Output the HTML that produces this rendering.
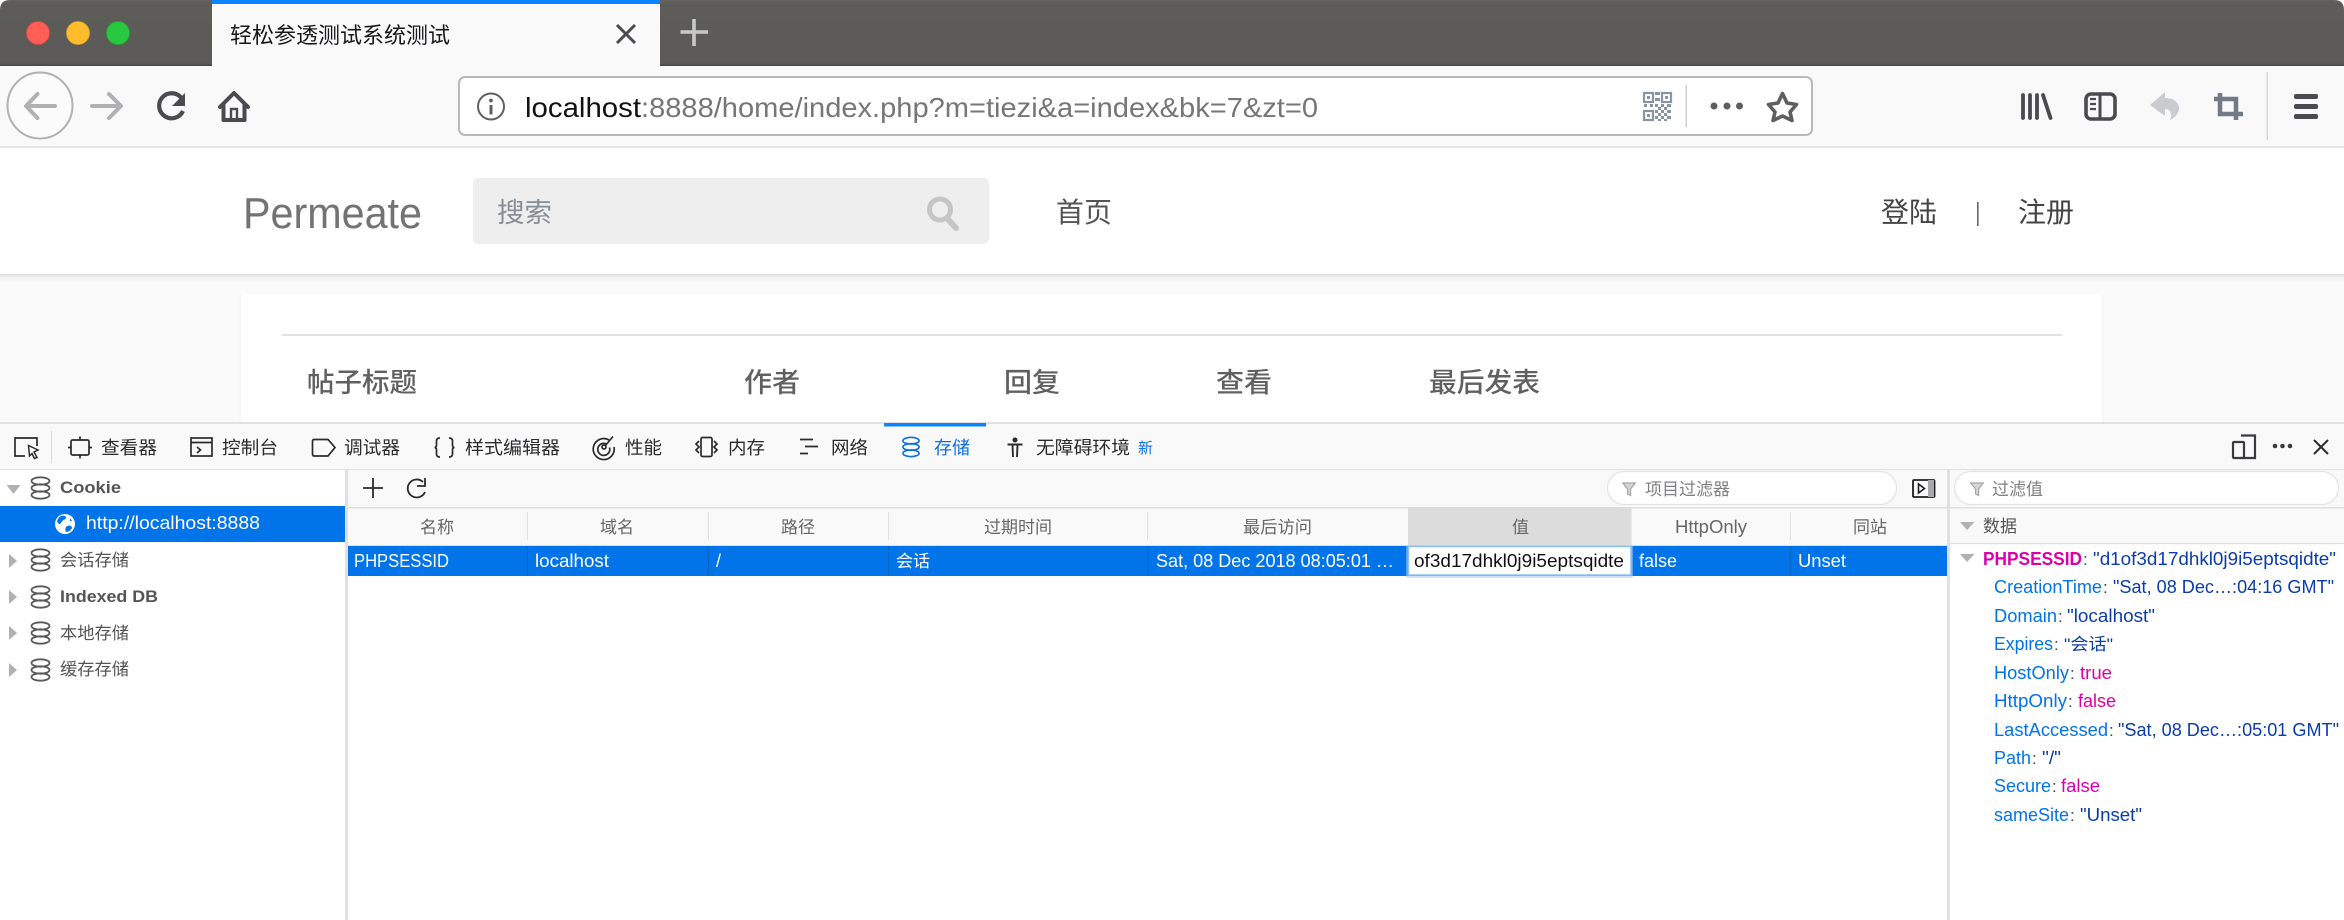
<!DOCTYPE html>
<html lang="zh"><head><meta charset="utf-8"><title>轻松参透测试系统测试</title>
<style>
html,body{margin:0;padding:0;background:#fff;width:2344px;height:920px;overflow:hidden}
svg{display:block;position:absolute;left:0;top:0;filter:blur(.35px)}
text{font-family:"Liberation Sans","Noto Sans CJK SC",sans-serif;white-space:pre}
.tb{font-size:18px;fill:#2b2b2e}
.h{font-size:17px;fill:#666}
.r{font-size:18px;fill:#fff}
.k{font-size:18px;fill:#0074e8}
.v{font-size:18px;fill:#0a3daa}
.c{font-size:17px;fill:#444}
.m{font-size:18px;fill:#dd00a9}
.side{font-size:17px;fill:#555}
.ic{fill:none;stroke:#2b2b2e;stroke-width:1.7}
</style></head><body>
<svg width="2344" height="920" viewBox="0 0 2344 920" xmlns="http://www.w3.org/2000/svg">
<defs>
<linearGradient id="strip" x1="0" y1="0" x2="0" y2="1"><stop offset="0" stop-color="#666664"/><stop offset=".04" stop-color="#5d5c59"/><stop offset=".96" stop-color="#5b5a57"/><stop offset="1" stop-color="#444"/></linearGradient>
<linearGradient id="shade" x1="0" y1="0" x2="0" y2="1"><stop offset="0" stop-color="#dcdcdc"/><stop offset=".35" stop-color="#f1f1f1"/><stop offset="1" stop-color="#fafafa"/></linearGradient>
<symbol id="db" viewBox="0 0 20 22" overflow="visible"><g fill="none" stroke-width="1.8" stroke="currentColor"><ellipse cx="10" cy="18" rx="9" ry="3.7"/><ellipse cx="10" cy="11" rx="9" ry="3.7"/><ellipse cx="10" cy="4" rx="9" ry="3.7"/></g></symbol>
<symbol id="fn" viewBox="0 0 14 15"><path d="M.8 1H13.2L8.6 7V13.5L5.6 12V7Z" fill="#d6d6d6" stroke="#a6a6a6" stroke-width="1.2"/></symbol>
</defs>

<!-- page background -->
<rect width="2344" height="920" fill="#fff"/>
<!-- tab strip -->
<path d="M0 66V10Q0 0 10 0H2334Q2344 0 2344 10V66Z" fill="url(#strip)"/>
<rect x="212" y="0" width="448" height="66" fill="#f9f9fa"/>
<rect x="212" y="0" width="448" height="4" fill="#0a84ff"/>
<ellipse cx="38" cy="33" rx="11.5" ry="11.5" fill="#ff5f57" stroke="#e0443e" stroke-width=".8"/>
<ellipse cx="78" cy="33" rx="11.5" ry="11.5" fill="#ffbd2e" stroke="#dea123" stroke-width=".8"/>
<ellipse cx="118" cy="33" rx="11.5" ry="11.5" fill="#28c940" stroke="#1dad2b" stroke-width=".8"/>
<text x="230" y="43" font-size="22" fill="#18181a" textLength="220" lengthAdjust="spacingAndGlyphs">轻松参透测试系统测试</text>
<path d="M617 25L635 43M635 25L617 43" stroke="#4a4a4f" stroke-width="3" fill="none"/>
<path d="M694 19V46M680.5 32H708" stroke="#c9c9c9" stroke-width="3.6" fill="none"/>

<!-- nav toolbar -->
<rect x="0" y="66" width="2344" height="80" fill="#f9f9fa"/>
<rect x="0" y="146" width="2344" height="2" fill="#e3e3e4"/>
<ellipse cx="40" cy="105.5" rx="32.5" ry="33" fill="#fbfbfb" stroke="#b1b1b3" stroke-width="2"/>
<path d="M55 106H27M37.5 94L26 106L37.5 118" fill="none" stroke="#b1b1b3" stroke-width="4" stroke-linecap="round" stroke-linejoin="round"/>
<path d="M92 106H120M109 94L121 106L109 118" fill="none" stroke="#b1b1b3" stroke-width="4" stroke-linecap="round" stroke-linejoin="round"/>
<path d="M181 97.5A12.5 12.5 0 1 0 183 111" fill="none" stroke="#4a4a4f" stroke-width="4.2"/>
<path d="M185 93V106H172Z" fill="#4a4a4f"/>
<path d="M220 107L234 93L248 107M223.5 104V120H244.500V104" fill="none" stroke="#4a4a4f" stroke-width="4" stroke-linejoin="round" stroke-linecap="round"/>
<rect x="231" y="109" width="6" height="11" fill="none" stroke="#4a4a4f" stroke-width="2.4"/>

<!-- URL bar -->
<rect x="459" y="77" width="1353" height="58" rx="6" fill="#fff" stroke="#b9b9ba" stroke-width="2"/>
<circle cx="491" cy="106.500" r="13" fill="none" stroke="#5f5f62" stroke-width="2"/>
<rect x="489.500" y="105" width="3" height="9.500" fill="#5f5f62"/><circle cx="491" cy="100.500" r="1.900" fill="#5f5f62"/>
<text x="525" y="117" font-size="28" fill="#111" textLength="116" lengthAdjust="spacingAndGlyphs">localhost</text>
<text x="641" y="117" font-size="28" fill="#767678" textLength="677" lengthAdjust="spacingAndGlyphs">:8888/home/index.php?m=tiezi&amp;a=index&amp;bk=7&amp;zt=0</text>
<!-- QR -->
<g fill="none" stroke="#8794a3" stroke-width="2.200">
<rect x="1644" y="93" width="9" height="9"/><rect x="1662" y="93" width="9" height="9"/><rect x="1644" y="111" width="9" height="9"/>
</g>
<g fill="#8794a3">
<rect x="1647" y="96" width="3" height="3"/><rect x="1665" y="96" width="3" height="3"/><rect x="1647" y="114" width="3" height="3"/>
<rect x="1655" y="92" width="5" height="3"/><rect x="1655" y="98" width="5" height="3"/><rect x="1655" y="104" width="3" height="3"/>
<rect x="1661" y="104" width="3" height="3"/><rect x="1667" y="104" width="4" height="3"/><rect x="1644" y="104" width="3" height="3"/><rect x="1650" y="104" width="3" height="3"/>
<rect x="1655" y="110" width="3" height="3"/><rect x="1661" y="110" width="3" height="3"/><rect x="1667" y="110" width="4" height="3"/>
<rect x="1658" y="107" width="3" height="3"/><rect x="1664" y="107" width="3" height="3"/><rect x="1655" y="116" width="3" height="3"/><rect x="1661" y="116" width="3" height="3"/><rect x="1667" y="116" width="4" height="3"/>
<rect x="1658" y="113" width="3" height="3"/><rect x="1664" y="113" width="3" height="3"/><rect x="1658" y="119" width="3" height="2"/><rect x="1664" y="119" width="3" height="2"/>
</g>
<rect x="1685.500" y="85" width="1.500" height="42" fill="#cfcfcf"/>
<circle cx="1714" cy="106" r="3.500" fill="#5e5e60"/><circle cx="1727" cy="106" r="3.500" fill="#5e5e60"/><circle cx="1739.500" cy="106" r="3.500" fill="#5e5e60"/>
<path d="M1782.500 93.500L1787 103L1796.500 104.500L1790 112L1792 120.500L1782.500 116L1773 120.500L1775 112L1768.500 104.500L1778 103Z" fill="none" stroke="#5e5e60" stroke-width="3.600" stroke-linejoin="round"/>
<!-- right toolbar -->
<g stroke="#4a4a4f" stroke-width="3.800" stroke-linecap="round" fill="none">
<path d="M2023 95V118M2030 95V118M2037 95V118M2043 95L2050.500 118"/>
</g>
<rect x="2086" y="94" width="29" height="25" rx="5" fill="none" stroke="#4a4a4f" stroke-width="3.600"/>
<path d="M2100 94V119" stroke="#4a4a4f" stroke-width="3"/>
<path d="M2090 99H2096M2090 104H2096M2090 109H2096" stroke="#4a4a4f" stroke-width="2.200"/>
<path d="M2165 92L2150 105L2165 116V109C2171 109 2172 114 2170 120C2177 117 2181 110 2178 104C2175 99 2170 98 2165 98Z" fill="#c9cdd2"/>
<path d="M2220 93V114H2243M2214 99H2236V120" fill="none" stroke="#737a87" stroke-width="4.500"/>
<rect x="2266.500" y="72" width="1.500" height="68" fill="#d8d8d8"/>
<rect x="2294" y="94" width="24" height="5" rx="2" fill="#4a4a4f"/><rect x="2294" y="104" width="24" height="5" rx="2" fill="#4a4a4f"/><rect x="2294" y="114" width="24" height="5" rx="2" fill="#4a4a4f"/>

<!-- page -->
<rect x="0" y="148" width="2344" height="126" fill="#fff"/>
<rect x="0" y="274" width="2344" height="150" fill="#fafafa"/>
<rect x="0" y="274" width="2344" height="9" fill="url(#shade)"/>
<text x="243" y="228" font-size="44" fill="#737373" textLength="179" lengthAdjust="spacingAndGlyphs">Permeate</text>
<rect x="473" y="178" width="516" height="66" rx="5" fill="#eee"/>
<text x="497" y="222" font-size="27" fill="#868e96" textLength="55" lengthAdjust="spacingAndGlyphs">搜索</text>
<circle cx="940" cy="209.500" r="10.500" fill="none" stroke="#c6c6c6" stroke-width="5"/>
<path d="M947 218L956 228" stroke="#c6c6c6" stroke-width="6" stroke-linecap="round"/>
<text x="1056" y="222" font-size="28" fill="#555" textLength="56" lengthAdjust="spacingAndGlyphs">首页</text>
<text x="1881" y="222" font-size="28" fill="#444" textLength="56" lengthAdjust="spacingAndGlyphs">登陆</text>
<rect x="1977" y="202" width="1.600" height="24" fill="#666"/>
<text x="2018" y="222" font-size="28" fill="#444" textLength="56" lengthAdjust="spacingAndGlyphs">注册</text>
<!-- card -->
<rect x="239" y="294" width="2" height="130" fill="#f6f6f6"/>
<rect x="2102" y="294" width="2" height="130" fill="#f6f6f6"/>
<rect x="241" y="294" width="1861" height="130" fill="#fff"/>
<rect x="282" y="334" width="1780" height="2" fill="#dfe3e6"/>
<g font-size="27" font-weight="500" fill="#606060">
<text x="307" y="392" textLength="110" lengthAdjust="spacingAndGlyphs">帖子标题</text>
<text x="744" y="392" textLength="56" lengthAdjust="spacingAndGlyphs">作者</text>
<text x="1004" y="392" textLength="56" lengthAdjust="spacingAndGlyphs">回复</text>
<text x="1216" y="392" textLength="56" lengthAdjust="spacingAndGlyphs">查看</text>
<text x="1429" y="392" textLength="111" lengthAdjust="spacingAndGlyphs">最后发表</text>
</g>

<!-- devtools -->
<rect x="0" y="422" width="2344" height="498" fill="#fff"/>
<rect x="0" y="422" width="2344" height="2" fill="#dfe1e4"/>
<rect x="0" y="424" width="2344" height="45" fill="#f9f9fa"/>
<rect x="0" y="469" width="2344" height="1.500" fill="#e0e0e2"/>
<rect x="884" y="423" width="102" height="3.500" fill="#0a84ff"/>
<!-- pick -->
<path d="M25 456H15V438H37V446" class="ic"/>
<path d="M28.500 445.500L38 450L34 452L37 457.500L34.500 458.500L32 453.500L29.500 456Z" fill="#fff" stroke="#2b2b2e" stroke-width="1.500"/>
<rect x="51" y="431" width="1" height="32" fill="#d8d8d8"/>
<!-- inspector -->
<rect x="71" y="440" width="18" height="15" rx="1.500" class="ic"/>
<path d="M80 436.500V440M80 455V458.500M68 447.500H71M89 447.500H92" class="ic"/>
<text x="101" y="454" class="tb" textLength="56" lengthAdjust="spacingAndGlyphs">查看器</text>
<!-- console -->
<rect x="191" y="438" width="21" height="18" class="ic"/><path d="M191 442.500H212" class="ic"/><path d="M197 447L200.500 450L197 453" class="ic"/>
<text x="222" y="454" class="tb" textLength="56" lengthAdjust="spacingAndGlyphs">控制台</text>
<!-- debugger -->
<path d="M314 439.500H328L335 447.500L328 456H314Q312.500 456 312.500 454V441.500Q312.500 439.500 314 439.500Z" class="ic"/>
<text x="344" y="454" class="tb" textLength="56" lengthAdjust="spacingAndGlyphs">调试器</text>
<!-- style -->
<path d="M440 438Q436.500 438 436.500 441V445Q436.500 447.500 434.500 447.500Q436.500 447.500 436.500 450V454Q436.500 457 440 457M449 438Q452.500 438 452.500 441V445Q452.500 447.500 454.500 447.500Q452.500 447.500 452.500 450V454Q452.500 457 449 457" class="ic" stroke-width="1.500"/>
<text x="465" y="454" class="tb" textLength="95" lengthAdjust="spacingAndGlyphs">样式编辑器</text>
<!-- perf -->
<path d="M609 440A10.500 10.500 0 1 0 614 447" class="ic"/>
<path d="M606.500 444A6 6 0 1 0 609.500 447.500" class="ic"/>
<circle cx="604" cy="447" r="2" class="ic"/><path d="M605 446L613 436.500" class="ic"/>
<text x="625" y="454" class="tb" textLength="37" lengthAdjust="spacingAndGlyphs">性能</text>
<!-- memory -->
<rect x="701" y="437.500" width="11" height="19" rx="1.500" class="ic" stroke-width="2"/>
<path d="M699 441L696 444L699 447L696 450L699 453M714 441L717 444L714 447L717 450L714 453" class="ic" stroke-width="1.300"/>
<text x="728" y="454" class="tb" textLength="37" lengthAdjust="spacingAndGlyphs">内存</text>
<!-- network -->
<path d="M800 439.500H813M805 446.500H818M800 453.500H808" class="ic" stroke-width="1.300" stroke="#555"/>
<text x="831" y="454" class="tb" textLength="37" lengthAdjust="spacingAndGlyphs">网络</text>
<!-- storage -->
<use href="#db" x="902" y="436" width="18" height="22" color="#0a6fe0"/>
<text x="934" y="454" font-size="18" fill="#0a6fe0" textLength="36" lengthAdjust="spacingAndGlyphs">存储</text>
<!-- a11y -->
<circle cx="1015" cy="440" r="2.500" fill="#2b2b2e"/>
<path d="M1007.500 444.500H1022.500M1012.500 444.500L1013 457M1017.500 444.500L1017 457" fill="none" stroke="#2b2b2e" stroke-width="1.900"/>
<text x="1036" y="454" class="tb" textLength="94" lengthAdjust="spacingAndGlyphs">无障碍环境</text>
<text x="1138" y="453" font-size="15" fill="#0a6fe0" textLength="15" lengthAdjust="spacingAndGlyphs">新</text>
<!-- right controls -->
<path d="M2241 435.500H2255V458H2241" fill="none" stroke="#3b3b3e" stroke-width="2.200"/>
<rect x="2233" y="442" width="11" height="16" rx="1" fill="none" stroke="#3b3b3e" stroke-width="2.200"/>
<circle cx="2275" cy="446" r="2.300" fill="#3b3b3e"/><circle cx="2282.500" cy="446" r="2.300" fill="#3b3b3e"/><circle cx="2290" cy="446" r="2.300" fill="#3b3b3e"/>
<path d="M2314 440L2328 454M2328 440L2314 454" stroke="#2b2b2e" stroke-width="2"/>

<!-- left sidebar -->
<rect x="0" y="470" width="345" height="450" fill="#fff"/>
<rect x="345" y="470" width="3" height="450" fill="#e0e0e2"/>
<rect x="0" y="506" width="345" height="36" fill="#0074e8"/>
<path d="M6.500 485H20.500L13.500 494Z" fill="#b1b1b3"/>
<g color="#5a5a5c"><use href="#db" x="30.500" y="477" width="20" height="22"/><use href="#db" x="30.500" y="549" width="20" height="22"/><use href="#db" x="30.500" y="586" width="20" height="22"/><use href="#db" x="30.500" y="622" width="20" height="22"/><use href="#db" x="30.500" y="659" width="20" height="22"/></g>
<text x="60" y="493" class="side" font-weight="700" textLength="61" lengthAdjust="spacingAndGlyphs">Cookie</text>
<circle cx="65" cy="524" r="10" fill="#fff"/>
<path d="M61 516C64 515 66 516 66 518C65 520 62 520 61 523C60 525 58 524 57 521C58 519 59 517 61 516ZM67 526C70 525 72 526 72 528C71 530 69 532 66 532C65 530 65 528 67 526ZM70 518L72 521L70 521Z" fill="#0074e8"/>
<text x="86" y="529" font-size="18" fill="#fff" textLength="174" lengthAdjust="spacingAndGlyphs">http://localhost:8888</text>
<path d="M9 554V568L17 561Z" fill="#b1b1b3"/>
<path d="M9 590V604L17 597Z" fill="#b1b1b3"/>
<path d="M9 626V640L17 633Z" fill="#b1b1b3"/>
<path d="M9 663V677L17 670Z" fill="#b1b1b3"/>
<text x="60" y="566" class="side" textLength="69" lengthAdjust="spacingAndGlyphs">会话存储</text>
<text x="60" y="602" class="side" font-weight="700" textLength="98" lengthAdjust="spacingAndGlyphs">Indexed DB</text>
<text x="60" y="639" class="side" textLength="69" lengthAdjust="spacingAndGlyphs">本地存储</text>
<text x="60" y="675" class="side" textLength="69" lengthAdjust="spacingAndGlyphs">缓存存储</text>

<!-- table toolbar -->
<rect x="348" y="470" width="1599" height="37" fill="#f9f9fa"/>
<rect x="348" y="507" width="1599" height="1.500" fill="#e0e0e2"/>
<path d="M373 478V498M363 488H383" stroke="#2b2b2e" stroke-width="1.800" fill="none"/>
<path d="M423 482A9 9 0 1 0 425 492" fill="none" stroke="#2b2b2e" stroke-width="1.800"/>
<path d="M425 478V486H417" fill="none" stroke="#2b2b2e" stroke-width="1.800"/>
<rect x="1607.500" y="471.500" width="289" height="33" rx="16.500" fill="#fff" stroke="#e2e2e4" stroke-width="1.200"/>
<use href="#fn" x="1622" y="482" width="14" height="15"/>
<text x="1645" y="495" font-size="17" fill="#808083" textLength="85" lengthAdjust="spacingAndGlyphs">项目过滤器</text>
<rect x="1913" y="480" width="21.500" height="17" rx="1" fill="#fff" stroke="#1e1e20" stroke-width="1.800"/>
<rect x="1928" y="480" width="6" height="17" fill="#a9a9ab"/>
<path d="M1918.500 484V493L1924.500 488.500Z" fill="none" stroke="#1e1e20" stroke-width="1.600"/>
<!-- table header -->
<rect x="348" y="508.500" width="1599" height="36.500" fill="#f9f9fa"/>
<rect x="348" y="545" width="1599" height="1" fill="#e0e0e2"/>
<rect x="1408" y="507" width="223.500" height="38" fill="#dcdcdc"/>
<g fill="#e0e0e2"><rect x="527" y="512" width="1" height="28"/><rect x="708" y="512" width="1" height="28"/><rect x="888" y="512" width="1" height="28"/><rect x="1147" y="512" width="1" height="28"/><rect x="1790" y="512" width="1" height="28"/></g>
<text x="420" y="533" class="h" textLength="34" lengthAdjust="spacingAndGlyphs">名称</text>
<text x="600" y="533" class="h" textLength="34" lengthAdjust="spacingAndGlyphs">域名</text>
<text x="781" y="533" class="h" textLength="34" lengthAdjust="spacingAndGlyphs">路径</text>
<text x="984" y="533" class="h" textLength="68" lengthAdjust="spacingAndGlyphs">过期时间</text>
<text x="1243" y="533" class="h" textLength="69" lengthAdjust="spacingAndGlyphs">最后访问</text>
<text x="1512" y="533" class="h" textLength="17" lengthAdjust="spacingAndGlyphs">值</text>
<text x="1675" y="533" class="h" font-size="18" style="font-size:18px" textLength="72" lengthAdjust="spacingAndGlyphs">HttpOnly</text>
<text x="1853" y="533" class="h" textLength="34" lengthAdjust="spacingAndGlyphs">同站</text>
<!-- row -->
<rect x="348" y="546" width="1599" height="30" fill="#0074e8"/>
<g fill="#0062c4"><rect x="527" y="546" width="1" height="30"/><rect x="708" y="546" width="1" height="30"/><rect x="888" y="546" width="1" height="30"/><rect x="1147" y="546" width="1" height="30"/><rect x="1790" y="546" width="1" height="30"/></g>
<text x="354" y="567" class="r" textLength="95" lengthAdjust="spacingAndGlyphs">PHPSESSID</text>
<text x="535" y="567" class="r" textLength="74" lengthAdjust="spacingAndGlyphs">localhost</text>
<text x="716" y="567" class="r" textLength="5" lengthAdjust="spacingAndGlyphs">/</text>
<text x="896" y="567" class="r" style="font-size:17px" textLength="34" lengthAdjust="spacingAndGlyphs">会话</text>
<text x="1156" y="567" class="r" textLength="238" lengthAdjust="spacingAndGlyphs">Sat, 08 Dec 2018 08:05:01 …</text>
<rect x="1406" y="545" width="227" height="33" rx="2" fill="#9ecbf9" opacity=".55"/>
<rect x="1408.500" y="546.500" width="222.500" height="28.500" fill="#fff" stroke="#8fc0f5" stroke-width="1.500"/>
<text x="1414" y="567" font-size="18" fill="#111" textLength="210" lengthAdjust="spacingAndGlyphs">of3d17dhkl0j9i5eptsqidte</text>
<text x="1639" y="567" class="r" textLength="38" lengthAdjust="spacingAndGlyphs">false</text>
<text x="1798" y="567" class="r" textLength="48" lengthAdjust="spacingAndGlyphs">Unset</text>

<!-- right pane -->
<rect x="1947" y="470" width="3" height="450" fill="#e0e0e2"/>
<rect x="1950" y="470" width="394" height="37" fill="#f9f9fa"/>
<rect x="1950" y="507" width="394" height="1.500" fill="#e0e0e2"/>
<rect x="1954.500" y="471.500" width="384" height="33" rx="16.500" fill="#fff" stroke="#e2e2e4" stroke-width="1.200"/>
<use href="#fn" x="1970" y="482" width="14" height="15"/>
<text x="1992" y="495" font-size="17" fill="#808083" textLength="51" lengthAdjust="spacingAndGlyphs">过滤值</text>
<rect x="1950" y="508.500" width="394" height="34.500" fill="#f9f9fa"/>
<rect x="1950" y="543" width="394" height="1.200" fill="#e0e0e2"/>
<path d="M1960 522H1974.500L1967 530Z" fill="#b1b1b3"/>
<text x="1983" y="532" font-size="17" fill="#555" textLength="34" lengthAdjust="spacingAndGlyphs">数据</text>
<path d="M1960 554H1974.500L1967 562Z" fill="#b1b1b3"/>
<text x="1983" y="565" class="m" font-weight="700" textLength="99" lengthAdjust="spacingAndGlyphs">PHPSESSID</text>
<text x="2083" y="565" class="c">:</text>
<text x="2093" y="565" class="v" textLength="243" lengthAdjust="spacingAndGlyphs">"d1of3d17dhkl0j9i5eptsqidte"</text>

<text x="1994" y="593" class="k" textLength="108" lengthAdjust="spacingAndGlyphs">CreationTime</text><text x="2103" y="593" class="c">:</text>
<text x="2113" y="593" class="v" textLength="221" lengthAdjust="spacingAndGlyphs">"Sat, 08 Dec…:04:16 GMT"</text>
<text x="1994" y="622" class="k" textLength="63" lengthAdjust="spacingAndGlyphs">Domain</text><text x="2058" y="622" class="c">:</text>
<text x="2067" y="622" class="v" textLength="88" lengthAdjust="spacingAndGlyphs">"localhost"</text>
<text x="1994" y="650" class="k" textLength="59" lengthAdjust="spacingAndGlyphs">Expires</text><text x="2054" y="650" class="c">:</text>
<text x="2064" y="650" class="v" style="font-size:17px" textLength="49" lengthAdjust="spacingAndGlyphs">"会话"</text>
<text x="1994" y="679" class="k" textLength="75" lengthAdjust="spacingAndGlyphs">HostOnly</text><text x="2070" y="679" class="c">:</text>
<text x="2080" y="679" class="m" textLength="32" lengthAdjust="spacingAndGlyphs">true</text>
<text x="1994" y="707" class="k" textLength="73" lengthAdjust="spacingAndGlyphs">HttpOnly</text><text x="2068" y="707" class="c">:</text>
<text x="2078" y="707" class="m" textLength="38" lengthAdjust="spacingAndGlyphs">false</text>
<text x="1994" y="736" class="k" textLength="114" lengthAdjust="spacingAndGlyphs">LastAccessed</text><text x="2109" y="736" class="c">:</text>
<text x="2118" y="736" class="v" textLength="221" lengthAdjust="spacingAndGlyphs">"Sat, 08 Dec…:05:01 GMT"</text>
<text x="1994" y="764" class="k" textLength="37" lengthAdjust="spacingAndGlyphs">Path</text><text x="2032" y="764" class="c">:</text>
<text x="2042" y="764" class="v" textLength="19" lengthAdjust="spacingAndGlyphs">"/"</text>
<text x="1994" y="792" class="k" textLength="57" lengthAdjust="spacingAndGlyphs">Secure</text><text x="2052" y="792" class="c">:</text>
<text x="2061" y="792" class="m" textLength="39" lengthAdjust="spacingAndGlyphs">false</text>
<text x="1994" y="821" class="k" textLength="75" lengthAdjust="spacingAndGlyphs">sameSite</text><text x="2070" y="821" class="c">:</text>
<text x="2080" y="821" class="v" textLength="62" lengthAdjust="spacingAndGlyphs">"Unset"</text>
</svg>
</body></html>
